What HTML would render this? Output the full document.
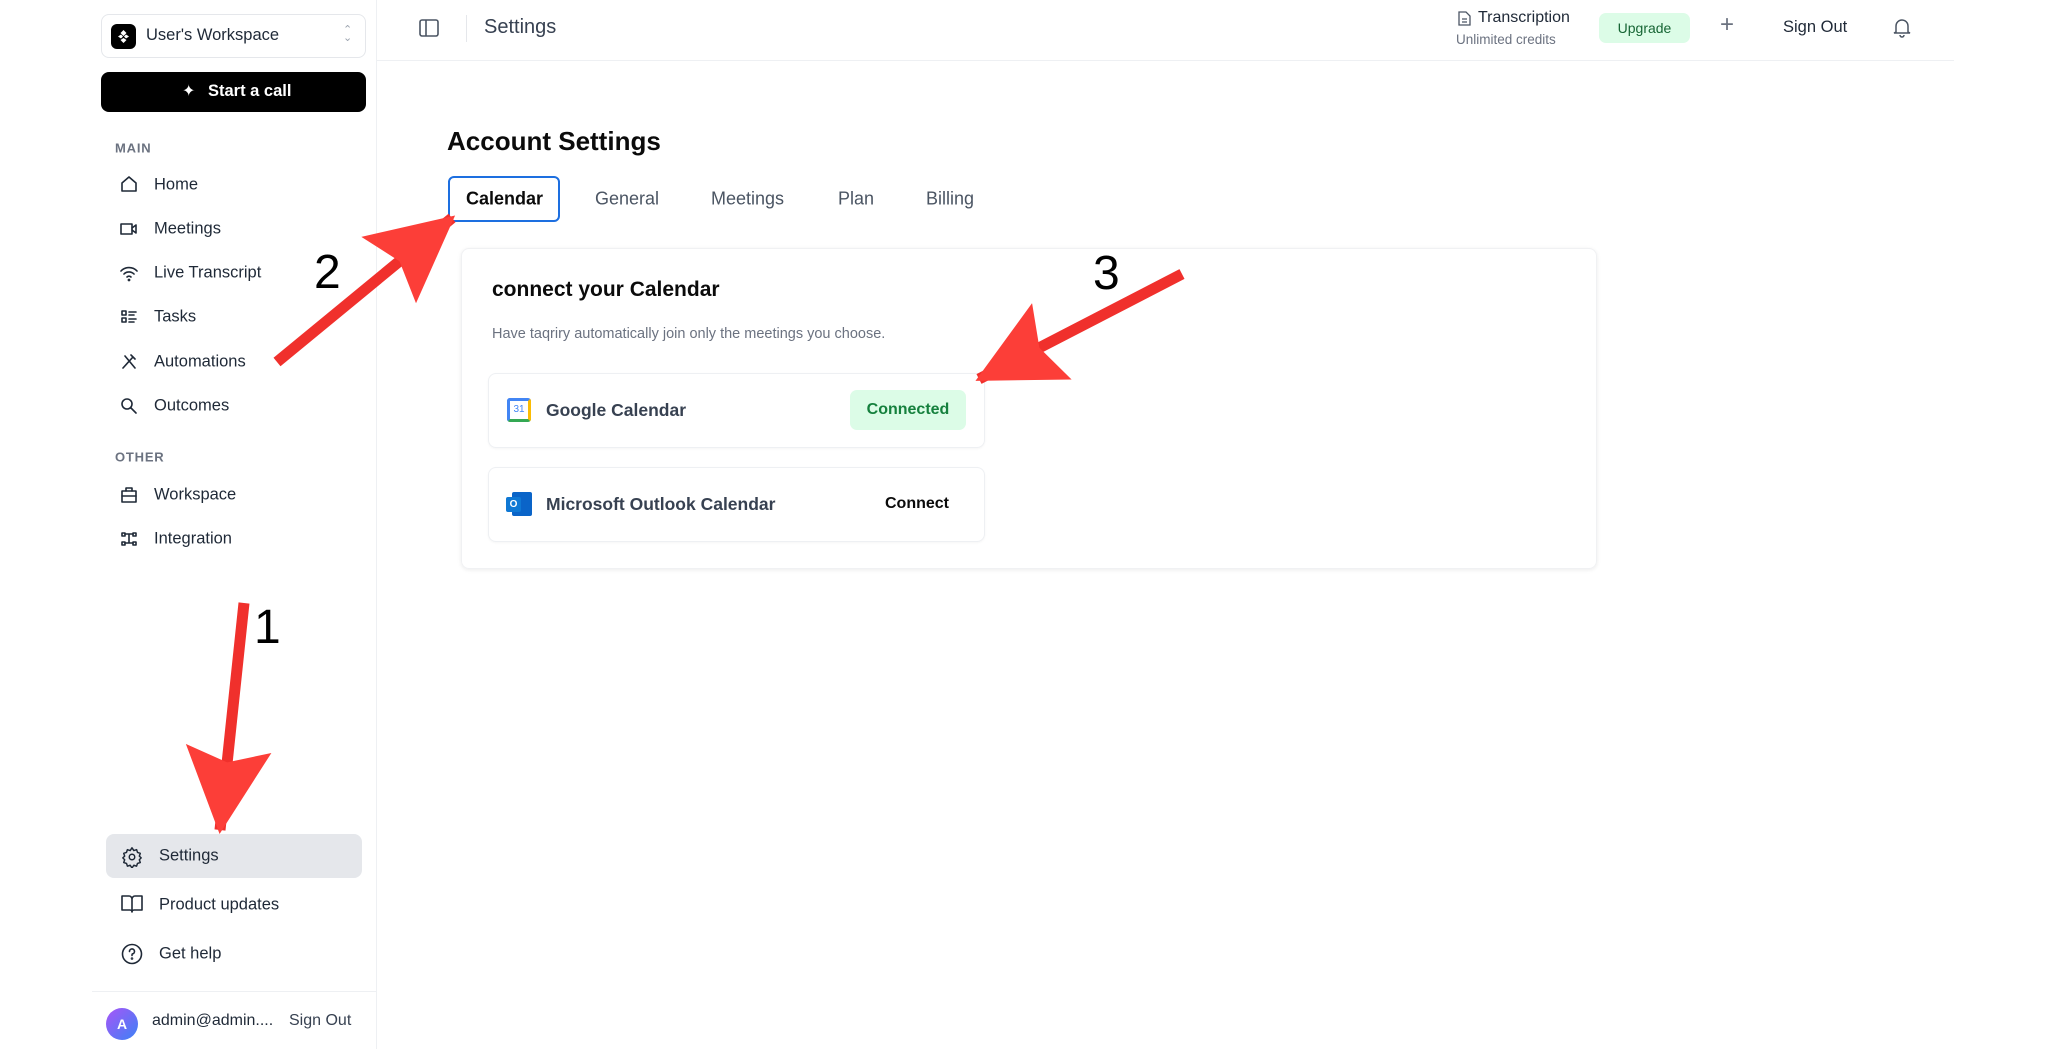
<!DOCTYPE html>
<html><head><meta charset="utf-8"><style>
*{box-sizing:border-box;margin:0;padding:0}
body{width:2048px;height:1049px;position:relative;background:#fff;font-family:"Liberation Sans",sans-serif;color:#111827;overflow:hidden}
.a{position:absolute}
.nav{position:absolute;left:154px;font-size:16.5px;color:#1f2937;transform:translateY(-50%)}
.ic{position:absolute;left:119px;width:20px;height:20px;transform:translateY(-50%)}
.lbl{position:absolute;left:115px;font-size:13px;font-weight:bold;color:#6b7280;letter-spacing:.8px;transform:translateY(-50%)}
.tab{position:absolute;top:199px;transform:translateY(-50%);font-size:18px;color:#4b5563}
svg.i{fill:none;stroke:#1f2937;stroke-width:1.6;stroke-linecap:round;stroke-linejoin:round}
</style></head><body>
<div class="a" style="left:376px;top:0;width:1px;height:1049px;background:#eef0f3"></div>
<div class="a" style="left:101px;top:14px;width:265px;height:44px;border:1px solid #e5e7eb;border-radius:8px"></div>
<div class="a" style="left:111px;top:24px;width:25px;height:25px;background:#000;border-radius:6px"></div>
<svg class="a" style="left:115px;top:28px" width="17" height="17" viewBox="0 0 17 17"><path d="M8.5 2l3 3-3 3-3-3zM3 8.5l3-2 2 2-2 2zM14 8.5l-3 2-2-2 2-2zM8.5 15l-3-3 3-2 3 2z" fill="#fff"/></svg>
<div class="a" style="left:146px;top:26px;font-size:16.5px;color:#1f2937">User's Workspace</div>
<div class="a" style="left:343px;top:26px;font-size:11px;color:#9ca3af;line-height:8px">⌃<br>⌄</div>
<div class="a" style="left:101px;top:72px;width:265px;height:40px;background:#000;border-radius:8px"></div>
<div class="a" style="left:182px;top:81px;font-size:16px;color:#fff">✦</div>
<div class="a" style="left:208px;top:82px;font-size:16.5px;color:#fff;font-weight:bold">Start a call</div>
<div class="lbl" style="top:148px">MAIN</div>
<svg class="ic i" style="top:184px" viewBox="0 0 20 20"><path d="M3 9l7-6 7 6v8H3z"/></svg><div class="nav" style="top:185px">Home</div>
<svg class="ic i" style="top:229px" viewBox="0 0 20 20"><rect x="2" y="5" width="11" height="10"/><path d="M13 9l4-3v8l-4-3"/></svg><div class="nav" style="top:229px">Meetings</div>
<svg class="ic i" style="top:273px" viewBox="0 0 20 20"><path d="M2 8a11 11 0 0 1 16 0M5 11a7 7 0 0 1 10 0M8 14a3 3 0 0 1 4 0"/><circle cx="10" cy="17" r=".6"/></svg><div class="nav" style="top:273px">Live Transcript</div>
<svg class="ic i" style="top:317px" viewBox="0 0 20 20"><rect x="3" y="4" width="4" height="4"/><rect x="3" y="11" width="4" height="4"/><path d="M10 5h7M10 8h5M10 12h7M10 15h5"/></svg><div class="nav" style="top:317px">Tasks</div>
<svg class="ic i" style="top:362px" viewBox="0 0 20 20"><path d="M4 16L14 5M6 4l10 12M12 3l4 4"/></svg><div class="nav" style="top:362px">Automations</div>
<svg class="ic i" style="top:406px" viewBox="0 0 20 20"><circle cx="8" cy="8" r="5"/><path d="M12 12l5 5"/></svg><div class="nav" style="top:406px">Outcomes</div>
<div class="lbl" style="top:457px">OTHER</div>
<svg class="ic i" style="top:495px" viewBox="0 0 20 20"><rect x="3" y="6" width="14" height="11"/><path d="M7 6V3h6v3M3 11h14"/></svg><div class="nav" style="top:495px">Workspace</div>
<svg class="ic i" style="top:539px" viewBox="0 0 20 20"><rect x="3" y="4" width="3" height="3"/><rect x="14" y="4" width="3" height="3"/><rect x="3" y="13" width="3" height="3"/><rect x="14" y="13" width="3" height="3"/><path d="M6 5h8M6 14h8M10 5v9"/></svg><div class="nav" style="top:539px">Integration</div>
<div class="a" style="left:106px;top:834px;width:256px;height:44px;background:#e5e7eb;border-radius:8px"></div>
<svg class="a i" style="left:121px;top:846px" width="22" height="22" viewBox="0 0 24 24"><circle cx="12" cy="12" r="3"/><path d="M12 2l2 3 3-1 1 3 3 1-1 3 2 2-2 2 1 3-3 1-1 3-3-1-2 3-2-3-3 1-1-3-3-1 1-3-2-2 2-2-1-3 3-1 1-3 3 1z"/></svg>
<div class="nav" style="left:159px;top:856px">Settings</div>
<svg class="a i" style="left:121px;top:894px" width="22" height="20" viewBox="0 0 22 20"><path d="M1 2h7a3 3 0 0 1 3 3v13a2 2 0 0 0-2-2H1zM21 2h-7a3 3 0 0 0-3 3v13a2 2 0 0 1 2-2h8z"/></svg>
<div class="nav" style="left:159px;top:905px">Product updates</div>
<svg class="a i" style="left:121px;top:943px" width="22" height="22" viewBox="0 0 22 22"><circle cx="11" cy="11" r="9.5"/><path d="M8.5 8.5a2.5 2.5 0 1 1 3 2.4c-.5.2-.5.6-.5 1.6"/><circle cx="11" cy="15.5" r=".5"/></svg>
<div class="nav" style="left:159px;top:954px">Get help</div>
<div class="a" style="left:92px;top:991px;width:284px;height:1px;background:#eef0f3"></div>
<div class="a" style="left:106px;top:1008px;width:32px;height:32px;border-radius:50%;background:linear-gradient(135deg,#a855f7,#3b82f6);color:#fff;font-weight:bold;font-size:14px;text-align:center;line-height:32px">A</div>
<div class="a" style="left:152px;top:1012px;font-size:16px;color:#1f2937">admin@admin....</div>
<div class="a" style="left:289px;top:1012px;font-size:16px;color:#374151">Sign Out</div>
<div class="a" style="left:377px;top:60px;width:1577px;height:1px;background:#eef0f3"></div>
<svg class="a" style="left:419px;top:19px" width="20" height="18" viewBox="0 0 20 18" fill="none" stroke="#4b5563" stroke-width="1.6"><rect x="1" y="1" width="18" height="16" rx="2"/><path d="M7 1v16"/></svg>
<div class="a" style="left:466px;top:15px;width:1px;height:27px;background:#e5e7eb"></div>
<div class="a" style="left:484px;top:16px;font-size:20px;color:#374151">Settings</div>
<svg class="a" style="left:1458px;top:11px" width="13" height="15" viewBox="0 0 13 15" fill="none" stroke="#4b5563" stroke-width="1.3"><path d="M1 1h7l4 4v9H1z M4 8h5M4 11h5"/></svg>
<div class="a" style="left:1478px;top:9px;font-size:16px;color:#1f2937">Transcription</div>
<div class="a" style="left:1456px;top:32px;font-size:13.5px;color:#6b7280">Unlimited credits</div>
<div class="a" style="left:1599px;top:13px;width:91px;height:30px;background:#dcfce7;border-radius:7px;color:#166534;font-size:14px;text-align:center;line-height:30px">Upgrade</div>
<div class="a" style="left:1720px;top:11px;font-size:24px;color:#6b7280;font-weight:300">+</div>
<div class="a" style="left:1783px;top:18px;font-size:16.5px;color:#1f2937">Sign Out</div>
<svg class="a" style="left:1893px;top:17px" width="18" height="21" viewBox="0 0 18 21" fill="none" stroke="#4b5563" stroke-width="1.5"><path d="M3 15V9a6 6 0 0 1 12 0v6l2 1H1zM7 18a2 2 0 0 0 4 0"/></svg>
<div class="a" style="left:447px;top:126px;font-size:26px;font-weight:bold;color:#0b0b0b">Account Settings</div>
<div class="a" style="left:448px;top:176px;width:112px;height:46px;border:2px solid #1d6fe0;border-radius:6px"></div>
<div class="tab" style="left:466px;color:#0b0b0b;font-weight:bold">Calendar</div>
<div class="tab" style="left:595px">General</div>
<div class="tab" style="left:711px">Meetings</div>
<div class="tab" style="left:838px">Plan</div>
<div class="tab" style="left:926px">Billing</div>
<div class="a" style="left:461px;top:248px;width:1136px;height:321px;border:1px solid #f0f1f3;border-radius:8px;box-shadow:0 1px 4px rgba(0,0,0,.08)"></div>
<div class="a" style="left:492px;top:278px;font-size:21px;font-weight:bold;color:#0b0b0b">connect your Calendar</div>
<div class="a" style="left:492px;top:326px;font-size:14.5px;color:#6b7280">Have taqriry automatically join only the meetings you choose.</div>
<div class="a" style="left:488px;top:373px;width:497px;height:75px;border:1px solid #eef0f3;border-radius:8px;box-shadow:0 1px 2px rgba(0,0,0,.04)"></div>
<div class="a" style="left:507px;top:398px;width:24px;height:24px;border-radius:3px;background:#fff;border:3px solid;border-color:#4285f4 #fbbc04 #34a853 #4285f4;font-size:10px;color:#4285f4;text-align:center;line-height:18px">31</div>
<div class="a" style="left:546px;top:400px;font-size:17.5px;font-weight:bold;color:#374151">Google Calendar</div>
<div class="a" style="left:850px;top:390px;width:116px;height:40px;background:#dcfce7;border-radius:7px;color:#15803d;font-weight:bold;font-size:16px;text-align:center;line-height:40px">Connected</div>
<div class="a" style="left:488px;top:467px;width:497px;height:75px;border:1px solid #eef0f3;border-radius:8px;box-shadow:0 1px 2px rgba(0,0,0,.04)"></div>
<div class="a" style="left:512px;top:492px;width:20px;height:24px;background:#0a64c8;border-radius:2px"></div>
<div class="a" style="left:506px;top:497px;width:15px;height:15px;background:#0f78d4;color:#fff;font-size:10px;font-weight:bold;text-align:center;line-height:15px;border-radius:2px">O</div>
<div class="a" style="left:546px;top:494px;font-size:17.5px;font-weight:bold;color:#374151">Microsoft Outlook Calendar</div>
<div class="a" style="left:885px;top:495px;font-size:16px;font-weight:bold;color:#0b0b0b">Connect</div>
<svg class="a" style="left:0;top:0" width="2048" height="1049">
<defs><marker id="m" markerUnits="userSpaceOnUse" markerWidth="92" markerHeight="90" refX="82" refY="45" orient="auto"><path d="M0 2L86 45L0 88L14 45z" fill="#fc3e38"/></marker></defs>
<g stroke="#f0302c" stroke-width="11" marker-end="url(#m)">
<line x1="277" y1="362" x2="452" y2="218"/>
<line x1="1182" y1="274" x2="979" y2="379"/>
<line x1="244" y1="603" x2="220" y2="830"/>
</g>
<g font-family="Liberation Sans,sans-serif" font-size="48" fill="#000">
<text x="314" y="288">2</text><text x="1093" y="289">3</text><text x="254" y="643">1</text>
</g></svg>
</body></html>
